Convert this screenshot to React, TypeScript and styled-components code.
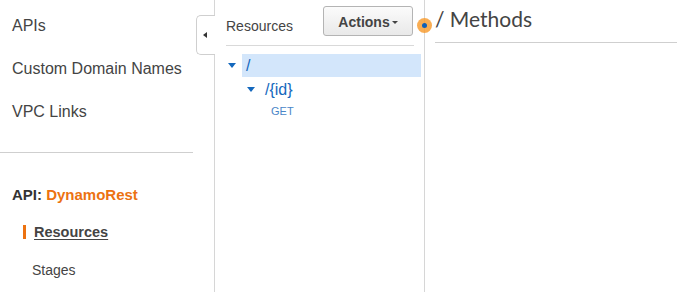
import React from "react";
import styled, { createGlobalStyle } from "styled-components";

const Global = createGlobalStyle`
  html, body { margin: 0; padding: 0; background: #fff; }
  body { font-family: "Liberation Sans", Arial, sans-serif; color: #444; }
  * { box-sizing: border-box; }
`;

const Page = styled.div`
  display: flex;
  height: 292px;
  width: 677px;
  overflow: hidden;
  position: relative;
`;

const Nav = styled.nav`
  position: relative;
  width: 215px;
  flex: none;
  border-right: 1px solid #d6d6d6;
  padding: 16px 21px 0 0;
  display: flex;
  flex-direction: column;
`;

const NavList = styled.div`
  display: flex;
  flex-direction: column;
  gap: 23px;
  padding-left: 12px;
`;

const NavItem = styled.div`
  font-size: 16px;
  line-height: 20px;
  color: #444;
  white-space: nowrap;
`;

const Divider = styled.div`
  height: 1px;
  background: #cfcfcf;
  margin-top: 30px;
`;

const ApiTitle = styled.div`
  margin: 33px 0 0 12px;
  font-size: 15px;
  line-height: 18px;
  font-weight: 700;
  color: #333;
  white-space: nowrap;
  span { color: #ec7211; }
`;

const SubItem = styled.div<{ $active?: boolean }>`
  margin-left: ${(p) => (p.$active ? "23px" : "32px")};
  margin-top: ${(p) => (p.$active ? "21px" : "22px")};
  padding-left: ${(p) => (p.$active ? "8px" : "0")};
  border-left: ${(p) => (p.$active ? "3px solid #ec7211" : "none")};
  font-size: ${(p) => (p.$active ? "14.5px" : "14px")};
  line-height: ${(p) => (p.$active ? "14px" : "18px")};
  font-weight: ${(p) => (p.$active ? 700 : 400)};
  text-decoration: ${(p) => (p.$active ? "underline" : "none")};
  text-underline-offset: 2px;
  color: #444;
`;

const CollapseTab = styled.div`
  position: absolute;
  left: 196px;
  top: 15px;
  width: 19px;
  height: 40px;
  background: #fff;
  border: 1px solid #cfcfcf;
  border-right: none;
  border-radius: 5px 0 0 5px;
  display: flex;
  align-items: center;
  justify-content: center;
  padding-right: 2px;
  z-index: 2;
`;

const LeftArrow = styled.div`
  width: 0;
  height: 0;
  border-top: 3.5px solid transparent;
  border-bottom: 3.5px solid transparent;
  border-right: 4px solid #333;
`;

const ResourcesPanel = styled.section`
  width: 210px;
  flex: none;
  border-right: 1px solid #d6d6d6;
  display: flex;
  flex-direction: column;
`;

const PanelHeader = styled.div`
  display: flex;
  justify-content: space-between;
  align-items: flex-start;
  margin: 0 10px 0 11px;
  padding: 6px 1px 9px 0;
  border-bottom: 1px solid #d9d9d9;
`;

const PanelTitle = styled.div`
  margin-top: 11px;
  font-size: 14px;
  line-height: 18px;
  color: #444;
`;

const ActionsButton = styled.button`
  width: 90px;
  height: 30px;
  display: flex;
  align-items: center;
  justify-content: center;
  gap: 2px;
  border: 1px solid #b4b4b4;
  border-radius: 3px;
  background: linear-gradient(#fbfbfb, #e9e9e9);
  font-family: "Liberation Sans", Arial, sans-serif;
  font-size: 14px;
  font-weight: 700;
  color: #444;
  padding: 2px 0 0;
`;

const Caret = styled.span`
  width: 0;
  height: 0;
  margin-top: 1px;
  border-left: 3px solid transparent;
  border-right: 3px solid transparent;
  border-top: 3.5px solid #444;
`;

const Tree = styled.div`
  display: flex;
  flex-direction: column;
  padding: 8px 3px 0 13px;
`;

const TreeRow = styled.div<{ $level: number }>`
  display: flex;
  align-items: center;
  height: 23px;
  margin-bottom: 1px;
  padding-left: ${(p) => p.$level * 19}px;
`;

const Toggle = styled.span`
  width: 0;
  height: 0;
  flex: none;
  border-left: 4px solid transparent;
  border-right: 4px solid transparent;
  border-top: 5px solid #1468bd;
  margin-right: 6px;
`;

const NodeLabel = styled.div<{ $selected?: boolean }>`
  flex: 1;
  height: 100%;
  display: flex;
  align-items: center;
  padding-left: 4px;
  background: ${(p) => (p.$selected ? "#d3e6fb" : "transparent")};
  font-size: 16px;
  color: #1468bd;
`;

const MethodLeaf = styled.div`
  padding-left: 43px;
  height: 18px;
  line-height: 18px;
  font-size: 11px;
  color: #4a86c8;
`;

const MethodsPanel = styled.section`
  position: relative;
  flex: 1;
  padding-left: 10px;
`;

const MethodsTitle = styled.h1`
  margin: 0;
  padding: 7px 0 11px;
  border-bottom: 1px solid #cfcfcf;
  font-family: Lato, "Open Sans", sans-serif;
  font-weight: 400;
  font-size: 21px;
  line-height: 24px;
  color: #444;
  white-space: nowrap;
`;

const DragHandle = styled.div`
  position: absolute;
  left: -8px;
  top: 18px;
  width: 15px;
  height: 15px;
  border-radius: 50%;
  background: rgba(247, 152, 40, 0.8);
  display: flex;
  align-items: center;
  justify-content: center;
  z-index: 3;
  &::after {
    content: "";
    width: 5px;
    height: 5px;
    border-radius: 50%;
    background: #0d5fb8;
  }
`;

export default function App() {
  return (
    <Page>
      <Global />
      <Nav>
        <NavList>
          <NavItem>APIs</NavItem>
          <NavItem>Custom Domain Names</NavItem>
          <NavItem>VPC Links</NavItem>
        </NavList>
        <Divider />
        <ApiTitle>
          API: <span>DynamoRest</span>
        </ApiTitle>
        <SubItem $active>Resources</SubItem>
        <SubItem>Stages</SubItem>
        <CollapseTab>
          <LeftArrow />
        </CollapseTab>
      </Nav>
      <ResourcesPanel>
        <PanelHeader>
          <PanelTitle>Resources</PanelTitle>
          <ActionsButton>
            Actions<Caret />
          </ActionsButton>
        </PanelHeader>
        <Tree>
          <TreeRow $level={0}>
            <Toggle />
            <NodeLabel $selected>/</NodeLabel>
          </TreeRow>
          <TreeRow $level={1}>
            <Toggle />
            <NodeLabel>/{"{id}"}</NodeLabel>
          </TreeRow>
          <MethodLeaf>GET</MethodLeaf>
        </Tree>
      </ResourcesPanel>
      <MethodsPanel>
        <DragHandle />
        <MethodsTitle>/ Methods</MethodsTitle>
      </MethodsPanel>
    </Page>
  );
}
